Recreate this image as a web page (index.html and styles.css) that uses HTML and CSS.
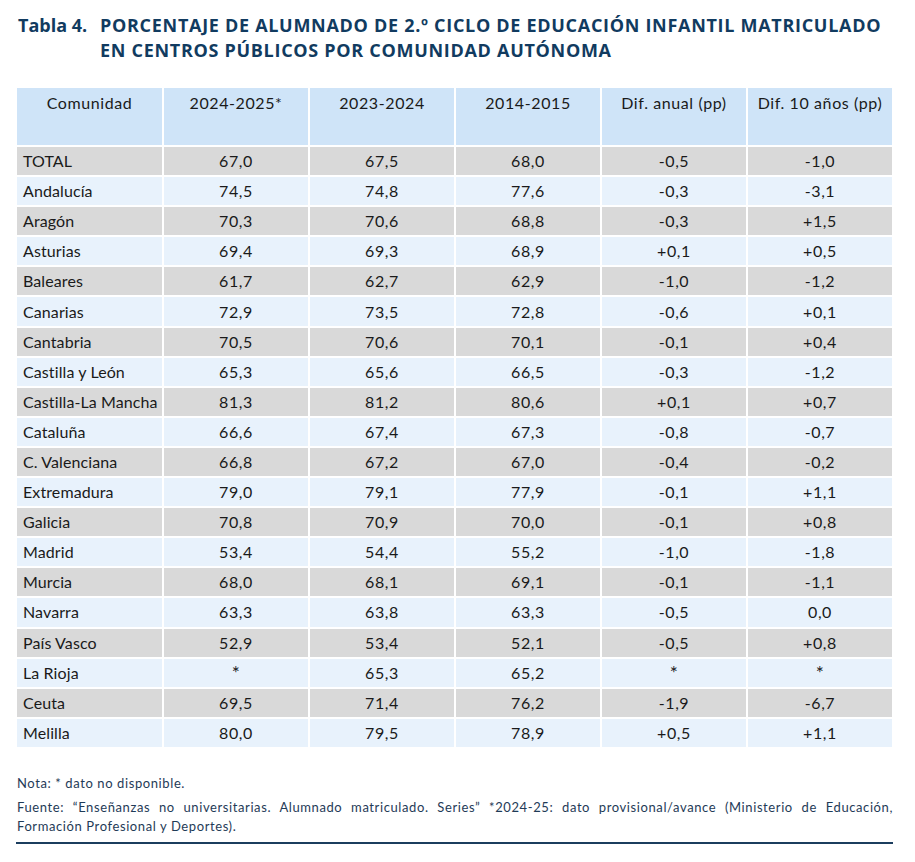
FILE: index.html
```html
<!DOCTYPE html>
<html lang="es">
<head>
<meta charset="utf-8">
<link rel="stylesheet" href="styles.css">
</head>
<body>
<div class="page">
  <h1 class="title">
    <span class="title-label">Tabla 4.</span>
    <span class="title-text">PORCENTAJE DE ALUMNADO DE 2.º CICLO DE EDUCACIÓN INFANTIL MATRICULADO EN CENTROS PÚBLICOS POR COMUNIDAD AUTÓNOMA</span>
  </h1>
  <table class="data">
    <thead>
      <tr>
        <th>Comunidad</th><th>2024-2025*</th><th>2023-2024</th><th>2014-2015</th><th>Dif. anual (pp)</th><th>Dif. 10 años (pp)</th>
      </tr>
    </thead>
    <tbody>
      <tr class="g"><td>TOTAL</td><td>67,0</td><td>67,5</td><td>68,0</td><td>-0,5</td><td>-1,0</td></tr>
      <tr class="b"><td>Andalucía</td><td>74,5</td><td>74,8</td><td>77,6</td><td>-0,3</td><td>-3,1</td></tr>
      <tr class="g"><td>Aragón</td><td>70,3</td><td>70,6</td><td>68,8</td><td>-0,3</td><td>+1,5</td></tr>
      <tr class="b"><td>Asturias</td><td>69,4</td><td>69,3</td><td>68,9</td><td>+0,1</td><td>+0,5</td></tr>
      <tr class="g"><td>Baleares</td><td>61,7</td><td>62,7</td><td>62,9</td><td>-1,0</td><td>-1,2</td></tr>
      <tr class="b"><td>Canarias</td><td>72,9</td><td>73,5</td><td>72,8</td><td>-0,6</td><td>+0,1</td></tr>
      <tr class="g"><td>Cantabria</td><td>70,5</td><td>70,6</td><td>70,1</td><td>-0,1</td><td>+0,4</td></tr>
      <tr class="b"><td>Castilla y León</td><td>65,3</td><td>65,6</td><td>66,5</td><td>-0,3</td><td>-1,2</td></tr>
      <tr class="g"><td>Castilla-La Mancha</td><td>81,3</td><td>81,2</td><td>80,6</td><td>+0,1</td><td>+0,7</td></tr>
      <tr class="b"><td>Cataluña</td><td>66,6</td><td>67,4</td><td>67,3</td><td>-0,8</td><td>-0,7</td></tr>
      <tr class="g"><td>C. Valenciana</td><td>66,8</td><td>67,2</td><td>67,0</td><td>-0,4</td><td>-0,2</td></tr>
      <tr class="b"><td>Extremadura</td><td>79,0</td><td>79,1</td><td>77,9</td><td>-0,1</td><td>+1,1</td></tr>
      <tr class="g"><td>Galicia</td><td>70,8</td><td>70,9</td><td>70,0</td><td>-0,1</td><td>+0,8</td></tr>
      <tr class="b"><td>Madrid</td><td>53,4</td><td>54,4</td><td>55,2</td><td>-1,0</td><td>-1,8</td></tr>
      <tr class="g"><td>Murcia</td><td>68,0</td><td>68,1</td><td>69,1</td><td>-0,1</td><td>-1,1</td></tr>
      <tr class="b"><td>Navarra</td><td>63,3</td><td>63,8</td><td>63,3</td><td>-0,5</td><td>0,0</td></tr>
      <tr class="g"><td>País Vasco</td><td>52,9</td><td>53,4</td><td>52,1</td><td>-0,5</td><td>+0,8</td></tr>
      <tr class="b"><td>La Rioja</td><td class="na">*</td><td>65,3</td><td>65,2</td><td class="na">*</td><td class="na">*</td></tr>
      <tr class="g"><td>Ceuta</td><td>69,5</td><td>71,4</td><td>76,2</td><td>-1,9</td><td>-6,7</td></tr>
      <tr class="b"><td>Melilla</td><td>80,0</td><td>79,5</td><td>78,9</td><td>+0,5</td><td>+1,1</td></tr>
    </tbody>
  </table>
  <div class="notes">
    <p class="note">Nota: * dato no disponible.</p>
    <p class="source">Fuente: “Enseñanzas no universitarias. Alumnado matriculado. Series” *2024-25: dato provisional/avance (Ministerio de Educación, Formación Profesional y Deportes).</p>
  </div>
  <div class="rule"></div>
</div>
</body>
</html>
```
FILE: styles.css
```css
html, body {
  margin: 0;
  padding: 0;
  background: #ffffff;
}
.page {
  width: 915px;
  padding: 13px 0 0 0;
  font-family: "Lato", "Liberation Sans", sans-serif;
  color: #1a1a1a;
}
.title {
  display: flex;
  margin: 0 0 0 18px;
  font-family: "Open Sans", "Liberation Sans", sans-serif;
  font-weight: 700;
  font-size: 18px;
  line-height: 25px;
  color: #113b60;
  letter-spacing: 0.7px;
}
.title-label {
  flex: 0 0 82px;
  letter-spacing: 0;
}
.title-text {
  width: 790px;
}
.data {
  border-collapse: separate;
  border-spacing: 2px;
  margin: 23px 0 0 15px;
  table-layout: fixed;
  width: 879px;
}
.data th, .data td {
  box-sizing: border-box;
  font-size: 16px;
  font-weight: 400;
  text-align: center;
  padding: 0 6px;
  letter-spacing: 0.6px;
  white-space: nowrap;
}
.data th {
  background: #cfe4f8;
  height: 57px;
  vertical-align: top;
  padding-top: 4px;
  line-height: 22px;
}
.data td {
  height: 28.1px;
  line-height: 28px;
}
.data td:first-child {
  text-align: left;
  letter-spacing: 0.1px;
}
.data th:first-child {
  width: 145px;
}
.data tr.g td { background: #d9d9d9; }
.data tr.b td { background: #e8f2fc; }
.data td.na {
  font-size: 19px;
  line-height: 22px;
  vertical-align: top;
  padding-top: 3px;
}
.notes {
  margin: 25px 22px 0 17px;
  font-family: "Lato", "Liberation Sans", sans-serif;
  font-size: 13px;
  letter-spacing: 0.6px;
  color: #1f3b57;
}
.note {
  margin: 0 0 5px 0;
  line-height: 19px;
}
.source {
  margin: 0;
  line-height: 19px;
  text-align: justify;
}
.rule {
  margin: 6px 22px 0 16px;
  height: 2px;
  background: #1b3d5e;
}
```
